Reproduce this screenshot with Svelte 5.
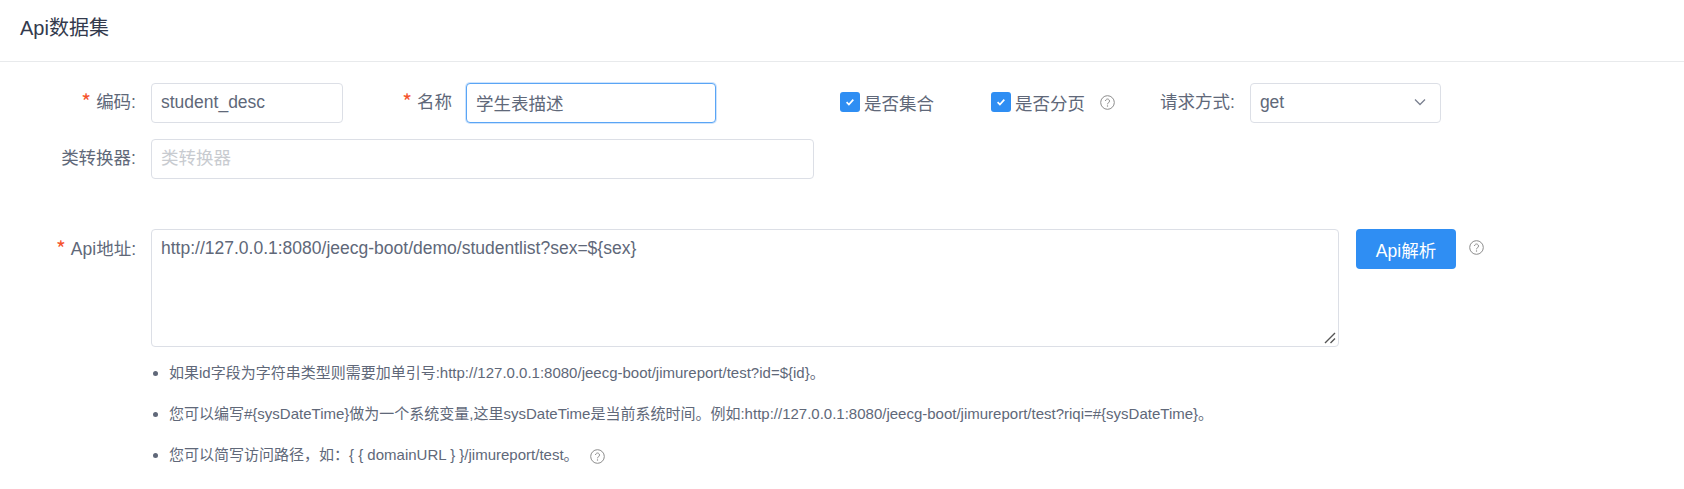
<script lang="ts">
    let code = $state("student_desc");
    let name = $state("学生表描述");
    let isList = $state(true);
    let isPage = $state(true);
    let method = $state("get");
    let converter = $state("");
    let apiUrl = $state("http://127.0.0.1:8080/jeecg-boot/demo/studentlist?sex=${sex}");
</script>

{#snippet help()}
    <svg class="help" width="15" height="15" viewBox="0 0 15 15" fill="none" stroke="#8c8c8c" aria-hidden="true">
        <circle cx="7.5" cy="7.5" r="6.8" />
        <path d="M5.5 6a2 2 0 1 1 3.1 1.7c-.7.4-1.1.8-1.1 1.6" stroke-width="1" />
        <circle cx="7.5" cy="11" r=".7" fill="#8c8c8c" stroke="none" />
    </svg>
{/snippet}

{#snippet check(checked, label)}
    <label class="check">
        <input type="checkbox" {checked} />
        <span class="box">
            <svg width="12" height="12" viewBox="0 0 12 12" fill="none" stroke="#fff" stroke-width="1.7">
                <path d="M2.6 6.2l2.3 2.4 4.4-5" />
            </svg>
        </span>
        {label}
    </label>
{/snippet}

<div class="page">
    <header>Api数据集</header>

    <form>
        <div class="row first">
            <label class="label code-label"><i>*</i>编码:</label>
            <input class="code" bind:value={code} />
            <label class="label name-label"><i>*</i>名称</label>
            <input class="name focused" bind:value={name} />
            <div class="checks">
                {@render check(isList, "是否集合")}
                {@render check(isPage, "是否分页")}
                {@render help()}
            </div>
            <label class="label method-label">请求方式:</label>
            <div class="select">
                <span>{method}</span>
                <svg width="12" height="12" viewBox="0 0 12 12" fill="none" stroke="#7b8190" stroke-width="1.3">
                    <path d="M1 3.5l5 5 5-5" />
                </svg>
            </div>
        </div>

        <div class="row second">
            <label class="label code-label">类转换器:</label>
            <input class="converter" placeholder="类转换器" bind:value={converter} />
        </div>

        <div class="row api">
            <label class="label code-label"><i>*</i>Api地址:</label>
            <div class="api-main">
                <div class="textarea-wrap">
                    <textarea bind:value={apiUrl}></textarea>
                    <svg class="grip" width="12" height="12" viewBox="0 0 12 12" fill="none" stroke="#555" stroke-width="1.4">
                        <path d="M1 11L11 1M6.5 11L11 6.5" />
                    </svg>
                </div>
                <ul>
                    <li>如果id字段为字符串类型则需要加单引号:http://127.0.0.1:8080/jeecg-boot/jimureport/test?id=${"{id}"}。</li>
                    <li>您可以编写#{"{sysDateTime}"}做为一个系统变量,这里sysDateTime是当前系统时间。例如:http://127.0.0.1:8080/jeecg-boot/jimureport/test?riqi=#{"{sysDateTime}"}。</li>
                    <li>您可以简写访问路径，如：{"{ { domainURL } }"}/jimureport/test。 {@render help()}</li>
                </ul>
            </div>
            <button type="button">Api解析</button>
            {@render help()}
        </div>
    </form>
</div>

<style>
    :global(body) {
        margin: 0;
        background: #fff;
        font-family: "Liberation Sans", "Noto Sans CJK SC", sans-serif;
    }
    .page {
        height: 489px;
        overflow: hidden;
    }
    header {
        height: 62px;
        box-sizing: border-box;
        padding: 14px 20px 0;
        font-size: 20px;
        line-height: 28px;
        color: #333a4d;
        border-bottom: 1px solid #e8eaec;
    }
    form {
        padding-top: 21px;
    }
    .row {
        display: flex;
        align-items: center;
    }
    .second {
        margin-top: 16px;
    }
    .api {
        margin-top: 50px;
        align-items: flex-start;
    }
    .label {
        font-size: 17.5px;
        line-height: 38px;
        padding-bottom: 2px;
        color: #606879;
        text-align: right;
        flex: none;
    }
    .api .label {
        line-height: 40px;
        padding-bottom: 0;
    }
    .label i {
        font-family: "Noto Sans CJK SC", sans-serif;
        font-size: 21px;
        line-height: 0;
        vertical-align: -2px;
        font-style: normal;
        color: #f5532d;
        margin-right: 5px;
    }
    .code-label {
        width: 136px;
        margin-right: 15px;
    }
    .name-label {
        width: 60px;
        margin-left: 49px;
        margin-right: 14px;
    }
    .method-label {
        margin-left: 45px;
        margin-right: 15px;
    }
    input:not([type="checkbox"]),
    textarea {
        box-sizing: border-box;
        height: 40px;
        padding: 0 9px 2px;
        font: inherit;
        font-size: 17.5px;
        color: #606879;
        background: #fff;
        border: 1px solid #dcdfe6;
        border-radius: 4px;
        outline: none;
    }
    .code {
        width: 192px;
    }
    .name {
        width: 250px;
    }
    .focused {
        border-color: #5aa5f5 !important;
        box-shadow: 0 0 0 1px #cfe4fc;
    }
    .converter {
        width: 663px;
    }
    .converter::placeholder {
        color: #c8cbd0;
    }
    .checks {
        display: flex;
        align-items: center;
        margin-left: 124px;
    }
    .checks .help {
        margin-bottom: 2px;
    }
    .check {
        display: flex;
        align-items: center;
        font-size: 17.5px;
        color: #606879;
        margin-bottom: 2px;
    }
    .check:nth-child(1) {
        width: 125px;
        margin-right: 26px;
    }
    .check:nth-child(2) {
        width: 109px;
    }
    .check input {
        display: none;
    }
    .box {
        width: 20px;
        height: 20px;
        margin-top: -1px;
        border-radius: 3px;
        background: #2f8ef3;
        display: flex;
        align-items: center;
        justify-content: center;
        margin-right: 4px;
    }
    .help {
        flex: none;
        vertical-align: middle;
    }
    .select {
        box-sizing: border-box;
        width: 191px;
        height: 40px;
        padding: 0 14px 2px 9px;
        display: flex;
        align-items: center;
        justify-content: space-between;
        font-size: 17.5px;
        color: #606879;
        border: 1px solid #dcdfe6;
        border-radius: 4px;
    }
    .api-main {
        width: 1188px;
        margin-right: 17px;
        flex: none;
    }
    .textarea-wrap {
        position: relative;
    }
    .grip {
        position: absolute;
        right: 3px;
        bottom: 3px;
        pointer-events: none;
    }
    textarea {
        display: block;
        width: 1188px;
        height: 118px !important;
        padding: 6px 9px !important;
        line-height: 24px;
        resize: none;
    }
    ul {
        margin: 16px 0 0;
        padding: 0 0 0 18px;
        font-size: 15px;
        color: #606879;
    }
    li {
        height: 20px;
        line-height: 20px;
        margin-bottom: 21px;
        white-space: nowrap;
    }
    li .help {
        margin-left: 7px;
    }
    button {
        flex: none;
        box-sizing: border-box;
        width: 100px;
        height: 40px;
        margin-right: 13px;
        border: none;
        border-radius: 4px;
        background: #2f8ef3;
        color: #fff;
        font: inherit;
        font-size: 17.5px;
    }
    .api > .help {
        margin-top: 11px;
    }
</style>
